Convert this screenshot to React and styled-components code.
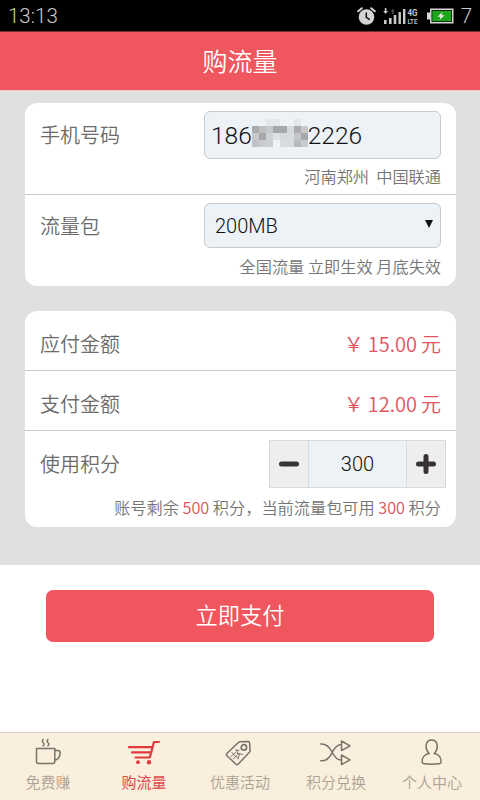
import React from "react";
import styled, { createGlobalStyle } from "styled-components";

const Global = createGlobalStyle`
  * { box-sizing: border-box; }
  body { margin: 0; background: #fff; font-family: "Noto Sans CJK SC", sans-serif; font-weight: 350; }
  button, input { font: inherit; }
`;

const Screen = styled.div`
  width: 480px;
  height: 800px;
  display: flex;
  flex-direction: column;
  overflow: hidden;
`;

const StatusBar = styled.div`
  height: 32px;
  flex: none;
  background: #000;
  color: #c9c9c9;
  display: flex;
  align-items: center;
  justify-content: space-between;
  padding: 1px 8px 0 8px;
  border-bottom: 1px solid #7a2a2f;
  font: 300 20.5px/30px Roboto, sans-serif;
`;

const StatusIcons = styled.div`
  display: flex;
  align-items: center;
  gap: 7px;
  svg { display: block; }
`;

const Header = styled.h1`
  height: 59px;
  flex: none;
  margin: 0;
  background: #f0565d;
  color: #fff;
  border-bottom: 1px solid #f3c9ca;
  text-align: center;
  font-size: 25px;
  font-weight: 350;
  line-height: 57px;
`;

const Content = styled.main`
  height: 474px;
  flex: none;
  background: #e0e0de;
  padding: 12px 24px 0 25px;
  display: flex;
  flex-direction: column;
  gap: 25px;
`;

const Card = styled.section`
  background: #fff;
  border-radius: 12px;
`;

const Row = styled.div`
  height: ${(p) => p.$h}px;
  padding: ${(p) => p.$top || 0}px 15px 0;
  display: flex;
  flex-direction: column;
  & + & { border-top: 1px solid #c9c9c9; }
`;

const Line = styled.div`
  height: ${(p) => p.$h}px;
  display: flex;
  flex: none;
  align-items: center;
  justify-content: space-between;
`;

const Label = styled.span`
  font-size: 20px;
  line-height: 30px;
  color: #6b6b6b;
`;

const Note = styled.div`
  text-align: right;
  font-size: 16.2px;
  line-height: 24px;
  margin-top: ${(p) => p.$gap}px;
  color: #757575;
  white-space: pre;
`;

const Accent = styled.span`
  color: #e0525c;
`;

const Field = styled.div`
  width: 237px;
  height: ${(p) => p.$h}px;
  border: 1.5px solid #c8cacd;
  border-radius: 6px;
  background: #edf2f7;
  color: #111;
  display: flex;
  align-items: center;
  padding: 0 7px 0 ${(p) => p.$pad}px;
  font: 350 ${(p) => p.$size}px Roboto, sans-serif;
`;

const Arrow = styled.span`
  margin: -3px 0 0 auto;
  border: 4px solid transparent;
  border-top: 8px solid #111;
  border-bottom: 0;
`;

const Mosaic = styled.span`
  display: grid;
  grid-template-columns: repeat(8, 7px);
  grid-auto-rows: 7px;
  margin-top: -4px;
`;

const Cell = styled.i`
  background: ${(p) => p.$c};
`;

const Amount = styled.span`
  color: #e0525c;
  font-size: 20px;
  line-height: 30px;
  white-space: pre;
  word-spacing: -0.5px;
`;

const Stepper = styled.div`
  display: grid;
  grid-template-columns: 38px 99px 38px;
  height: 48px;
  margin-right: -5px;
  border: 1px solid #d9dadb;
  width: 177px;
`;

const StepButton = styled.button`
  border: 0;
  padding: 0;
  background: #eee;
  display: grid;
  place-items: center;
`;

const StepValue = styled.span`
  border: solid #d9dcdf;
  border-width: 0 1px;
  background: #edf2f7;
  color: #111;
  text-align: center;
  font: 350 20px/46px Roboto, sans-serif;
`;

const PayArea = styled.div`
  flex: 1;
  padding: 25px 46px 0;
`;

const PayButton = styled.button`
  display: block;
  width: 388px;
  height: 52px;
  border: 0;
  border-radius: 7px;
  background: #f0565d;
  color: #fff;
  font-size: 22.3px;
  padding: 0 0 4px;
`;

const TabBar = styled.nav`
  height: 68px;
  flex: none;
  border-top: 1px solid #d8d0c8;
  background: #faeedd;
  display: grid;
  grid-template-columns: repeat(5, 96px);
`;

const Tab = styled.div`
  display: flex;
  flex-direction: column;
  align-items: center;
  padding-top: 5px;
  font-size: 15px;
  line-height: 22px;
  font-weight: ${(p) => (p.$active ? 400 : 350)};
  color: ${(p) => (p.$active ? "#e0474c" : "#aaa294")};
  svg { display: block; margin-bottom: 3px; }
`;

const Glyph = styled.svg`
  fill: none;
  stroke: ${(p) => (p.$active ? "#e0393f" : "#77736a")};
  stroke-width: 1.5;
  stroke-linecap: round;
  stroke-linejoin: round;
`;

const MOSAIC = [
  "#edf2f7", "#edf2f7", "#e3e7eb", "#e3e7eb", "#edf2f7", "#edf2f7", "#e3e7eb", "#edf2f7",
  "#a9abad", "#bec0c2", "#c6c8ca", "#a5a7a9", "#a5a7a9", "#d6d9dc", "#a9abad", "#c6c8ca",
  "#c6c8ca", "#a5a7a9", "#d0d3d6", "#dde1e5", "#d6d9dc", "#d8dbde", "#c3c5c8", "#a5a7a9",
  "#bfc1c4", "#c8cacd", "#cccfd1", "#edf2f7", "#d8dbde", "#d8dbde", "#b8babd", "#c9ccce",
];

function Alarm() {
  return (
    <svg width="19" height="20" viewBox="0 0 19 20" fill="none" stroke="#d4d4d4" strokeLinecap="round">
      <circle cx="9.5" cy="11" r="7.8" fill="#d4d4d4" stroke="none" />
      <path d="M1.200 5.300 4.800 2.200M17.800 5.300 14.200 2.200" strokeWidth="2" />
      <path d="M9.300 7v4.300l3 2" stroke="#111" strokeWidth="1.500" />
    </svg>
  );
}

function Signal() {
  return (
    <svg width="36" height="18" viewBox="0 0 36 18" fill="#c9c9c9">
      <path d="M1 13h2.600v4H1zM6 11h2.600v6H6zM10.700 8h2.600v9h-2.600zM15.500 5h2.400v12h-2.400zM20 2h2.400v15H20z" />
      <path d="M.2 4h1.600V1h1.600v3H5L2.600 7z" />
      <path d="m9.800 2 2 2.500h-1.300V7H9.200V4.500H7.800z" fill="#555" />
      <text x="24.500" y="9" fontFamily="Roboto" fontWeight="700" fontSize="9" textLength="10" lengthAdjust="spacingAndGlyphs">4G</text>
      <text x="24.500" y="17" fontFamily="Roboto" fontWeight="500" fontSize="7" textLength="10" lengthAdjust="spacingAndGlyphs">LTE</text>
    </svg>
  );
}

function Battery() {
  return (
    <svg width="28" height="16" viewBox="0 0 28 16">
      <path d="M4 .5h23.500v15H4zM1 4.500h3v7H1z" fill="#d6d6d6" />
      <path d="M5.500 2h20.500v12H5.500z" fill="#111" />
      <path d="M6.300 2.800h18.900v10.400H6.300z" fill="#1fa51c" />
      <path d="m16.500 4-5 4.700h3L13.500 12l5-4.700h-3z" fill="#eee" />
    </svg>
  );
}

const Cup = () => (
  <Glyph width="30" height="30" viewBox="0 0 30 30">
    <path d="M3.500 10.500h18.300v13q0 2-2 2H5.500q-2 0-2-2zM21.800 12.500h3q2.300 0 2.300 2.500 0 6-5.300 7.300M10.200 1.500q-1.800 1.500 0 3.200t0 3M15 1.500q-1.800 1.500 0 3.200t0 3" />
  </Glyph>
);

const Cart = () => (
  <Glyph $active width="34" height="30" viewBox="0 0 34 30">
    <path d="M32 4h-5L22.800 19.500H8.500M2 9.200h23.500M5 14.400h19.300" strokeWidth="2.200" />
    <circle cx="11" cy="24.200" r="1.900" fill="#e0393f" stroke="none" />
    <circle cx="22" cy="24.200" r="2.200" fill="#e0393f" stroke="none" />
  </Glyph>
);

const TagIcon = () => (
  <Glyph width="30" height="30" viewBox="0 0 30 30">
    <path d="M14.300 3.800 23 3.400q1.400 0 1.600 1.600l.5 8.500L13.300 26q-1.200 1.200-2.500 0L2 17.800q-1.200-1.200 0-2.500z" />
    <circle cx="18.900" cy="9.400" r="2.700" strokeWidth="1.700" />
    <path d="m7 14.500 5.500 5.500M6 18.500l4.500-4M8.500 20.500l3-2.500M10.700 11.800l3.300.8M11.500 12.300l1.500 4.700M13 15.300l4.500 1.200M14.500 16l-1.500 5" strokeWidth="1" />
  </Glyph>
);

const Shuffle = () => (
  <Glyph width="32" height="30" viewBox="0 0 32 30">
    <path d="M.8 6c5.500-.5 8.700 3 11.200 8s5 8.200 9.500 8.200M.8 22.800c5.500.5 8.700-3 11.200-8s5-8.200 9.500-8.200M21.500 3v9.600l8.500-4.800zM21.500 17v9.600l8.500-4.800z" />
  </Glyph>
);

const Person = () => (
  <Glyph width="24" height="30" viewBox="0 0 24 30">
    <path d="M9.200 15.500C4.700 11.500 4.800 2 11.600 2s7.100 9.500 2.600 13.500c4.800.7 7 4.500 6.800 8.500q0 1.500-2 1.700-7.400.9-14.800 0-2-.2-2-1.700c-.2-4 2.200-7.800 7-8.500" />
  </Glyph>
);

const TABS = [
  [Cup, "免费赚"],
  [Cart, "购流量"],
  [TagIcon, "优惠活动"],
  [Shuffle, "积分兑换"],
  [Person, "个人中心"],
];

export default function App() {
  return (
    <Screen>
      <Global />
      <StatusBar>
        <span>13:13</span>
        <StatusIcons>
          <Alarm />
          <Signal />
          <Battery />
          <span>7</span>
        </StatusIcons>
      </StatusBar>
      <Header>购流量</Header>
      <Content>
        <Card>
          <Row $h={91} $top={8}>
            <Line $h={48}>
              <Label>手机号码</Label>
              <Field $h={48} $pad={6} $size={24.5}>
                186
                <Mosaic>{MOSAIC.map((c, i) => <Cell key={i} $c={c} />)}</Mosaic>
                2226
              </Field>
            </Line>
            <Note $gap={5}>河南郑州  中国联通</Note>
          </Row>
          <Row $h={92} $top={8}>
            <Line $h={45}>
              <Label>流量包</Label>
              <Field $h={45} $pad={10} $size={20}>
                200MB
                <Arrow />
              </Field>
            </Line>
            <Note $gap={6}>全国流量 立即生效 月底失效</Note>
          </Row>
        </Card>
        <Card>
          <Row $h={59} $top={3}>
            <Line $h={60}>
              <Label>应付金额</Label>
              <Amount>￥ 15.00 元</Amount>
            </Line>
          </Row>
          <Row $h={60} $top={3}>
            <Line $h={60}>
              <Label>支付金额</Label>
              <Amount>￥ 12.00 元</Amount>
            </Line>
          </Row>
          <Row $h={97} $top={9}>
            <Line $h={48}>
              <Label>使用积分</Label>
              <Stepper>
                <StepButton aria-label="-">
                  <svg width="20" height="20" viewBox="0 0 20 20" stroke="#373335" strokeWidth="5" strokeLinecap="round"><path d="M2.500 10h15" /></svg>
                </StepButton>
                <StepValue>300</StepValue>
                <StepButton aria-label="+">
                  <svg width="20" height="20" viewBox="0 0 20 20" stroke="#373335" strokeWidth="5" strokeLinecap="round"><path d="M2.500 10h15M10 2.500v15" /></svg>
                </StepButton>
              </Stepper>
            </Line>
            <Note $gap={7}>账号剩余 <Accent>500</Accent> 积分，当前流量包可用 <Accent>300</Accent> 积分</Note>
          </Row>
        </Card>
      </Content>
      <PayArea>
        <PayButton>立即支付</PayButton>
      </PayArea>
      <TabBar>
        {TABS.map(([Icon, name], i) => (
          <Tab key={name} $active={i === 1}>
            <Icon />
            {name}
          </Tab>
        ))}
      </TabBar>
    </Screen>
  );
}
